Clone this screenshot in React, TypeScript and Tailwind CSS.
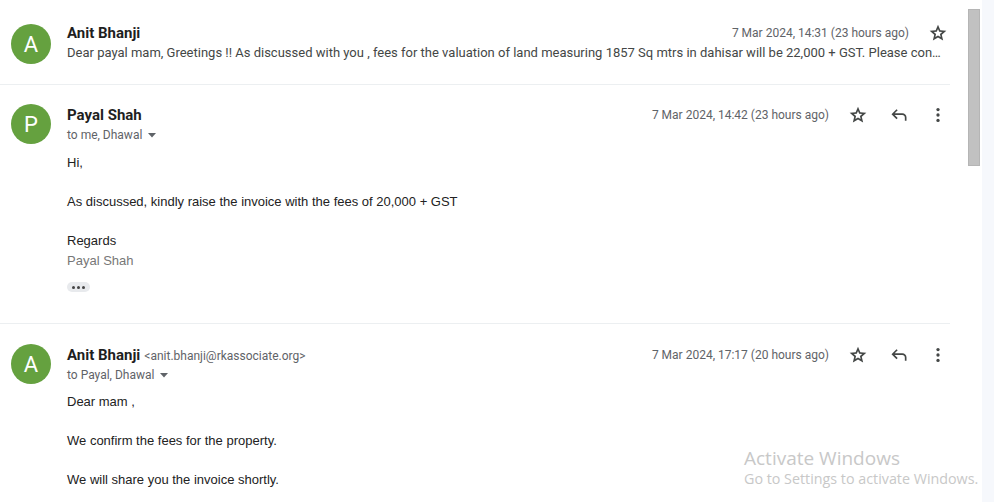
import React from "react";

const StarIcon = () => (
  <svg viewBox="0 -960 960 960" width="20" height="20" fill="#444746">
    <path d="m354-287 126-76 126 77-33-144 111-96-146-13-58-136-58 135-146 13 111 97-33 143ZM233-120l65-281L80-590l288-25 112-265 112 265 288 25-218 189 65 281-247-149-247 149Zm247-350Z" />
  </svg>
);

const ReplyIcon = () => (
  <svg viewBox="0 -960 960 960" width="20" height="20" fill="#444746">
    <path d="M760-200v-160q0-50-35-85t-85-35H273l144 144-57 56-240-240 240-240 57 56-144 144h367q83 0 141.5 58.5T840-360v160h-80Z" />
  </svg>
);

const MoreIcon = () => (
  <svg viewBox="0 0 24 24" width="20" height="20" fill="#444746">
    <circle cx="12" cy="5.5" r="2" />
    <circle cx="12" cy="12" r="2" />
    <circle cx="12" cy="18.5" r="2" />
  </svg>
);

const Caret = () => (
  <svg viewBox="0 0 10 10" width="10" height="10" className="ml-[5px]" fill="#5f6368">
    <path d="M1 3h8L5 7.5z" />
  </svg>
);

const Avatar = ({ letter }: { letter: string }) => (
  <div className="w-10 h-10 rounded-full bg-[#65a13f] text-white flex items-center justify-center text-[22px] shrink-0 font-['Roboto',sans-serif]">
    {letter}
  </div>
);

const Actions = ({ date }: { date: string }) => (
  <div className="flex items-center h-5">
    <span className="text-[12px] text-[#5f6368] font-['Roboto',sans-serif] mr-[19px]">{date}</span>
    <div className="w-5 h-5 flex items-center justify-center"><StarIcon /></div>
    <div className="w-5 h-5 flex items-center justify-center ml-[21px]"><ReplyIcon /></div>
    <div className="w-5 h-5 flex items-center justify-center ml-[19px]"><MoreIcon /></div>
  </div>
);

export default function App() {
  const body = "font-['Liberation_Sans',Arial,sans-serif] text-[13px] text-[#222] leading-[19.5px]";
  const name = "font-['Roboto',sans-serif] font-bold text-[15px] text-[#1f1f1f]";
  return (
    <div className="w-[994px] h-[502px] overflow-hidden relative bg-white flex">
      <div className="w-[966px] shrink-0">
        {/* Message 1 collapsed */}
        <div className="h-[85px] w-[950px] border-b border-[#eceff1] flex pl-[11px] pr-[2px] pt-[24px]">
          <Avatar letter="A" />
          <div className="ml-4 -mt-[1px] flex-1 min-w-0">
            <div className="flex justify-between items-center h-5">
              <span className={name}>Anit Bhanji</span>
              <div className="flex items-center">
                <span className="text-[12px] text-[#5f6368] font-['Roboto',sans-serif] mr-[19px]">7 Mar 2024, 14:31 (23 hours ago)</span>
                <div className="w-5 h-5 flex items-center justify-center"><StarIcon /></div>
              </div>
            </div>
            <div className="truncate font-['Roboto',sans-serif] text-[13px] text-[#444746] h-5 leading-5 pr-[2px]">
              Dear payal mam, Greetings !! As discussed with you , fees for the valuation of land measuring 1857 Sq mtrs in dahisar will be 22,000 + GST. Please confirm the same so that we can proceed further.
            </div>
          </div>
        </div>

        {/* Message 2 expanded */}
        <div className="h-[239px] w-[950px] border-b border-[#eceff1] flex pl-[11px] pr-[2px] pt-[19px]">
          <Avatar letter="P" />
          <div className="ml-4 mt-[1px] flex-1 min-w-0">
            <div className="flex justify-between items-center h-5">
              <span className={name}>Payal Shah</span>
              <Actions date="7 Mar 2024, 14:42 (23 hours ago)" />
            </div>
            <div className="flex items-center h-5 text-[12px] text-[#5f6368] font-['Roboto',sans-serif]">
              to me, Dhawal <Caret />
            </div>
            <div className={`${body} mt-[8px]`}>
              <div>Hi,</div>
              <div>&nbsp;</div>
              <div>As discussed, kindly raise the invoice with the fees of 20,000 + GST</div>
              <div>&nbsp;</div>
              <div>Regards</div>
              <div className="text-[#777]">Payal Shah</div>
            </div>
            <div className="mt-[12px] w-[23px] h-[10px] rounded-full bg-[#e8eaed] flex items-center justify-center gap-[2px]">
              <span className="w-[3px] h-[3px] rounded-full bg-[#444]"></span>
              <span className="w-[3px] h-[3px] rounded-full bg-[#444]"></span>
              <span className="w-[3px] h-[3px] rounded-full bg-[#444]"></span>
            </div>
          </div>
        </div>

        {/* Message 3 expanded */}
        <div className="w-[950px] flex pl-[11px] pr-[2px] pt-[20px]">
          <Avatar letter="A" />
          <div className="ml-4 mt-[1px] flex-1 min-w-0">
            <div className="flex justify-between items-center h-5">
              <span className="flex items-baseline">
                <span className={name}>Anit Bhanji</span>
                <span className="ml-[4px] font-['Roboto',sans-serif] text-[12px] text-[#5f6368]">&lt;anit.bhanji@rkassociate.org&gt;</span>
              </span>
              <Actions date="7 Mar 2024, 17:17 (20 hours ago)" />
            </div>
            <div className="flex items-center h-5 text-[12px] text-[#5f6368] font-['Roboto',sans-serif]">
              to Payal, Dhawal <Caret />
            </div>
            <div className={`${body} mt-[7px]`}>
              <div>Dear mam ,</div>
              <div>&nbsp;</div>
              <div>We confirm the fees for the property.</div>
              <div>&nbsp;</div>
              <div>We will share you the invoice shortly.</div>
            </div>
          </div>
        </div>
      </div>

      {/* scrollbar */}
      <div className="w-[16px] shrink-0 bg-white pt-[9px] flex justify-center">
        <div className="w-[12px] h-[157px] bg-[#c1c1c1] border border-[#b5b5b5]"></div>
      </div>
      <div className="flex-1 bg-[#f6f8fc]"></div>

      {/* watermark */}
      <div className="absolute left-[744px] top-[446px] text-[#c8c8c8] font-['Open_Sans',sans-serif] pointer-events-none">
        <div className="text-[19px] leading-[24px]">Activate Windows</div>
        <div className="text-[14.3px] leading-[20px] -mt-[1px]">Go to Settings to activate Windows.</div>
      </div>
    </div>
  );
}
